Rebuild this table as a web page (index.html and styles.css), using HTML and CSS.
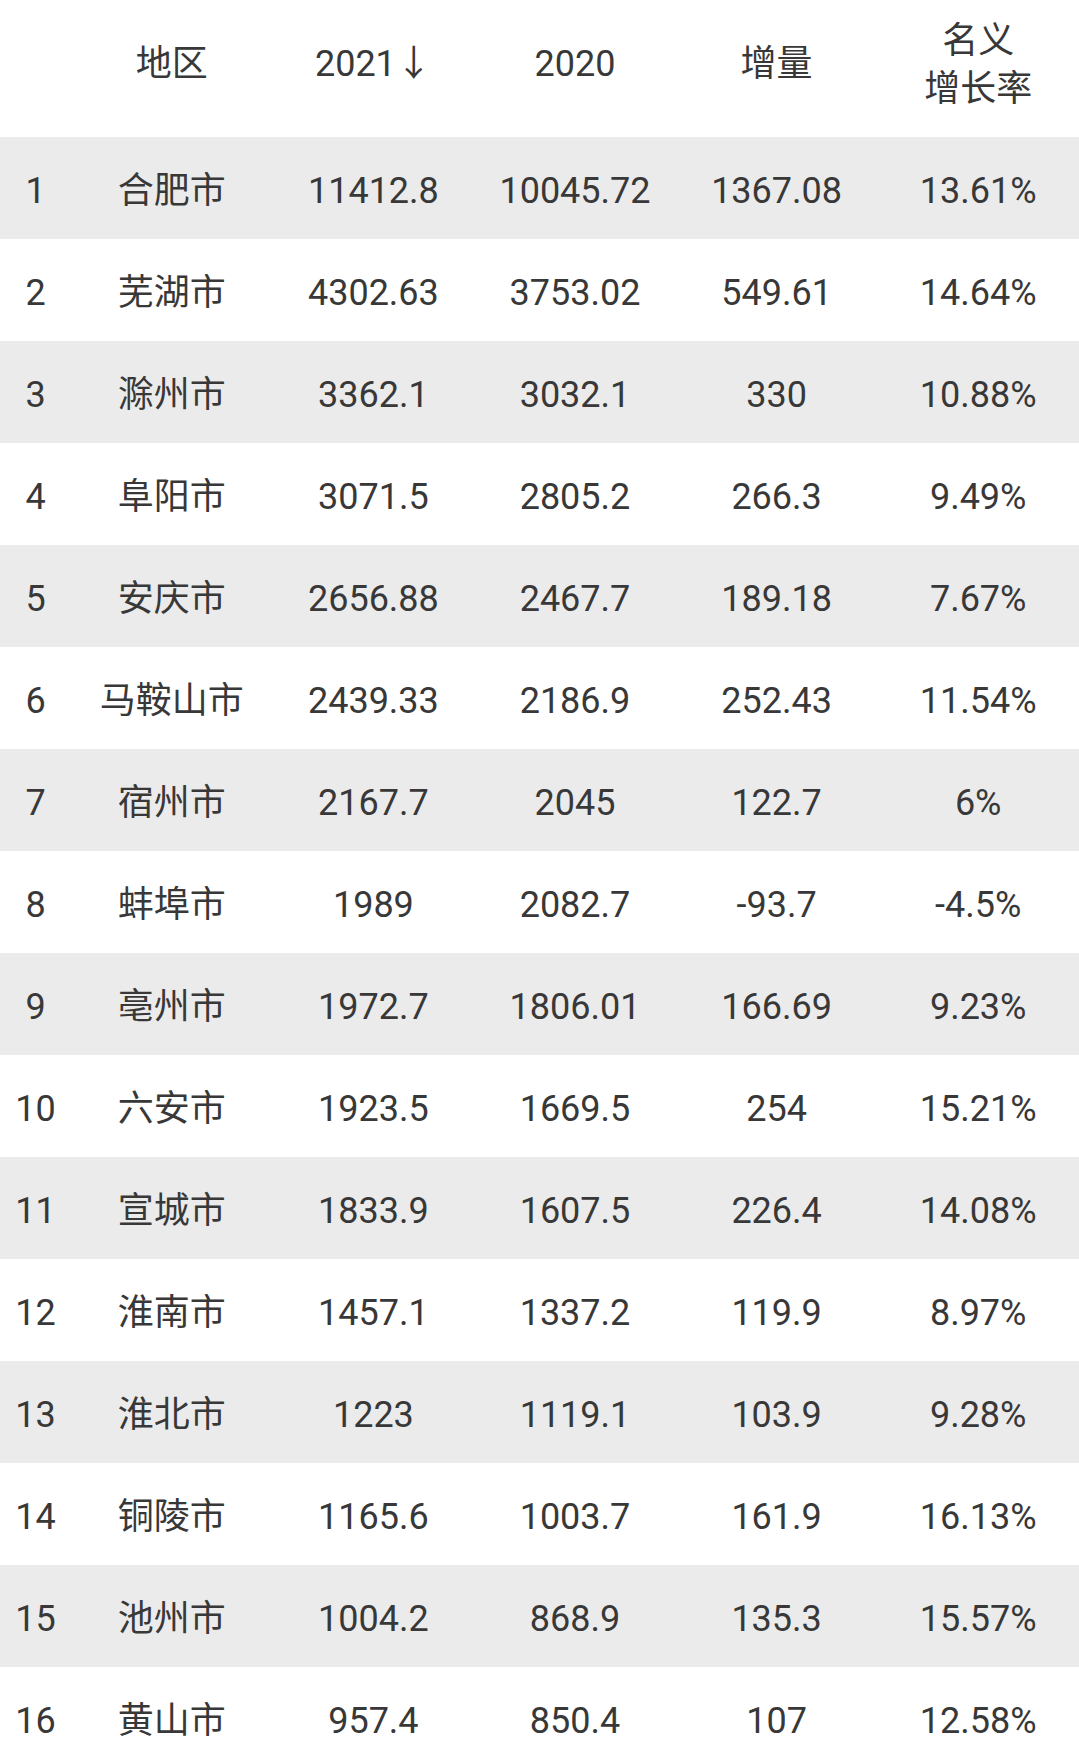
FILE: index.html
```html
<!DOCTYPE html>
<html lang="zh-CN">
<head>
<meta charset="utf-8">
<title>安徽各市GDP</title>
<link rel="stylesheet" href="styles.css">
</head>
<body>
<div class="page">
  <div class="row head">
    <div class="cell"></div>
    <div class="cell">地区</div>
    <div class="cell">2021↓</div>
    <div class="cell">2020</div>
    <div class="cell">增量</div>
    <div class="cell two">名义<br>增长率</div>
  </div>
  <div class="row odd"><div class="cell">1</div><div class="cell">合肥市</div><div class="cell">11412.8</div><div class="cell">10045.72</div><div class="cell">1367.08</div><div class="cell">13.61%</div></div>
  <div class="row"><div class="cell">2</div><div class="cell">芜湖市</div><div class="cell">4302.63</div><div class="cell">3753.02</div><div class="cell">549.61</div><div class="cell">14.64%</div></div>
  <div class="row odd"><div class="cell">3</div><div class="cell">滁州市</div><div class="cell">3362.1</div><div class="cell">3032.1</div><div class="cell">330</div><div class="cell">10.88%</div></div>
  <div class="row"><div class="cell">4</div><div class="cell">阜阳市</div><div class="cell">3071.5</div><div class="cell">2805.2</div><div class="cell">266.3</div><div class="cell">9.49%</div></div>
  <div class="row odd"><div class="cell">5</div><div class="cell">安庆市</div><div class="cell">2656.88</div><div class="cell">2467.7</div><div class="cell">189.18</div><div class="cell">7.67%</div></div>
  <div class="row"><div class="cell">6</div><div class="cell">马鞍山市</div><div class="cell">2439.33</div><div class="cell">2186.9</div><div class="cell">252.43</div><div class="cell">11.54%</div></div>
  <div class="row odd"><div class="cell">7</div><div class="cell">宿州市</div><div class="cell">2167.7</div><div class="cell">2045</div><div class="cell">122.7</div><div class="cell">6%</div></div>
  <div class="row"><div class="cell">8</div><div class="cell">蚌埠市</div><div class="cell">1989</div><div class="cell">2082.7</div><div class="cell">-93.7</div><div class="cell">-4.5%</div></div>
  <div class="row odd"><div class="cell">9</div><div class="cell">亳州市</div><div class="cell">1972.7</div><div class="cell">1806.01</div><div class="cell">166.69</div><div class="cell">9.23%</div></div>
  <div class="row"><div class="cell">10</div><div class="cell">六安市</div><div class="cell">1923.5</div><div class="cell">1669.5</div><div class="cell">254</div><div class="cell">15.21%</div></div>
  <div class="row odd"><div class="cell">11</div><div class="cell">宣城市</div><div class="cell">1833.9</div><div class="cell">1607.5</div><div class="cell">226.4</div><div class="cell">14.08%</div></div>
  <div class="row"><div class="cell">12</div><div class="cell">淮南市</div><div class="cell">1457.1</div><div class="cell">1337.2</div><div class="cell">119.9</div><div class="cell">8.97%</div></div>
  <div class="row odd"><div class="cell">13</div><div class="cell">淮北市</div><div class="cell">1223</div><div class="cell">1119.1</div><div class="cell">103.9</div><div class="cell">9.28%</div></div>
  <div class="row"><div class="cell">14</div><div class="cell">铜陵市</div><div class="cell">1165.6</div><div class="cell">1003.7</div><div class="cell">161.9</div><div class="cell">16.13%</div></div>
  <div class="row odd"><div class="cell">15</div><div class="cell">池州市</div><div class="cell">1004.2</div><div class="cell">868.9</div><div class="cell">135.3</div><div class="cell">15.57%</div></div>
  <div class="row"><div class="cell">16</div><div class="cell">黄山市</div><div class="cell">957.4</div><div class="cell">850.4</div><div class="cell">107</div><div class="cell">12.58%</div></div>
</div>
</body>
</html>
```

FILE: styles.css
```css
html, body {
  margin: 0;
  padding: 0;
  background: #ffffff;
}
.page {
  width: 1079px;
  height: 1744px;
  overflow: hidden;
  font-family: Roboto, "Noto Sans CJK SC", sans-serif;
  font-size: 36px;
  color: #383838;
}
.row {
  display: grid;
  grid-template-columns: 71px repeat(5, 1fr);
  height: 102px;
  padding-top: 6px;
  box-sizing: border-box;
  align-items: center;
  background: #ffffff;
}
.row.odd {
  background: #ebebeb;
}
.row.head {
  height: 137px;
  padding-top: 0;
  padding-bottom: 8px;
}
.cell {
  text-align: center;
  white-space: nowrap;
  line-height: 1.3;
}
.cell.two {
  line-height: 48px;
}
```
